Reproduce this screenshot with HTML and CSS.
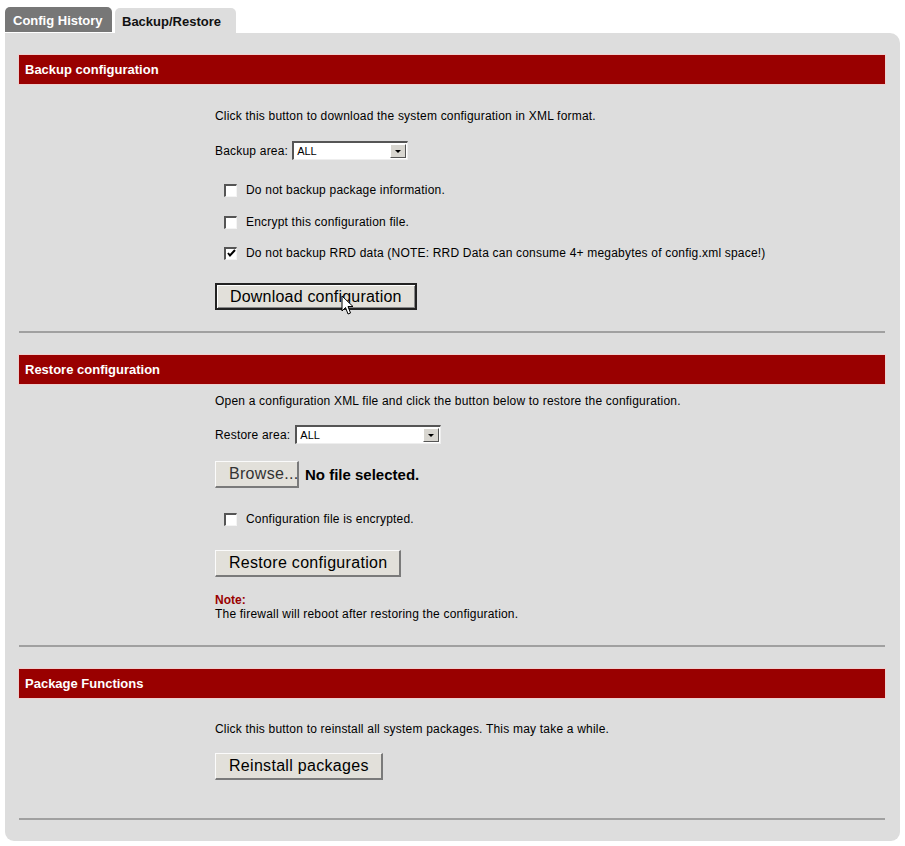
FILE: index.html
```html
<!DOCTYPE html>
<html>
<head>
<meta charset="utf-8">
<link rel="stylesheet" href="styles.css">
</head>
<body>
<div class="tabs">
  <div class="tab tab-off">Config History</div>
  <div class="tab tab-on">Backup/Restore</div>
</div>
<div class="panel">
  <div class="section">
    <div class="bar">Backup configuration</div>
    <div class="content c1">
      <div class="txt r-intro">Click this button to download the system configuration in XML format.</div>
      <div class="txt r-select">Backup area: <span class="select w-backup"><span class="sel-val">ALL</span><span class="sel-btn"><span class="arrow"></span></span></span></div>
      <label class="chk-row r-chk1"><span class="chk"></span><span class="txt">Do not backup package information.</span></label>
      <label class="chk-row r-chk2"><span class="chk"></span><span class="txt">Encrypt this configuration file.</span></label>
      <label class="chk-row r-chk3"><span class="chk checked"><svg width="9" height="9" viewBox="0 0 9 9"><path d="M1 4 L3 6.5 L8 1" fill="none" stroke="#000" stroke-width="2"/></svg></span><span class="txt">Do not backup RRD data (NOTE: RRD Data can consume 4+ megabytes of config.xml space!)</span></label>
      <div class="btn-wrap r-btn1">
        <span class="btn btn-default">Download configuration</span>
        <svg class="cursor" width="13" height="21" viewBox="0 0 13 21"><path d="M1 1 L1 16 L4.5 12.5 L7 19 L9.5 18 L7 11.5 L12 11.5 Z" fill="#fff" stroke="#000" stroke-width="1"/></svg>
      </div>
    </div>
    <div class="rule r-rule1"></div>
  </div>

  <div class="section">
    <div class="bar">Restore configuration</div>
    <div class="content">
      <div class="txt r-intro2">Open a configuration XML file and click the button below to restore the configuration.</div>
      <div class="txt r-select2">Restore area: <span class="select w-restore"><span class="sel-val">ALL</span><span class="sel-btn"><span class="arrow"></span></span></span></div>
      <div class="file-row r-file"><span class="btn btn-browse">Browse...</span><span class="nofile">No file selected.</span></div>
      <label class="chk-row r-chk4"><span class="chk"></span><span class="txt">Configuration file is encrypted.</span></label>
      <div class="btn-wrap r-btn2"><span class="btn">Restore configuration</span></div>
      <div class="note r-note">Note:</div>
      <div class="txt">The firewall will reboot after restoring the configuration.</div>
    </div>
    <div class="rule r-rule2"></div>
  </div>

  <div class="section">
    <div class="bar">Package Functions</div>
    <div class="content">
      <div class="txt r-intro3">Click this button to reinstall all system packages. This may take a while.</div>
      <div class="btn-wrap r-btn3"><span class="btn">Reinstall packages</span></div>
    </div>
    <div class="rule r-rule3"></div>
  </div>
</div>
</body>
</html>
```

FILE: styles.css
```css
html, body {
  margin: 0;
  padding: 0;
  background: #ffffff;
}
body {
  padding: 7px 5px 5px 5px;
  font-family: "Liberation Sans", Arial, sans-serif;
  font-size: 12px;
  color: #000;
  width: 895px;
}
.tabs {
  display: flex;
  align-items: flex-end;
  gap: 3px;
  height: 26px;
}
.tab {
  font-weight: bold;
  font-size: 13px;
  border-radius: 5px 5px 0 0;
  display: flex;
  align-items: center;
  box-sizing: border-box;
  padding-top: 2px;
}
.tab-off {
  background: #777777;
  color: #ffffff;
  height: 25px;
  padding-left: 8px;
  padding-right: 8px;
  align-self: flex-start;
  width: 107px;
}
.tab-on {
  background: #dddddd;
  color: #111;
  height: 25px;
  padding-left: 7px;
  padding-right: 7px;
  width: 121px;
}
.panel {
  background: #dddddd;
  border-radius: 0 10px 9px 9px;
  padding: 22px 15px 21px 14px;
}
.bar {
  background: #990000;
  color: #ffffff;
  font-weight: bold;
  font-size: 13px;
  height: 29px;
  line-height: 29px;
  padding-left: 6px;
  box-shadow: 0 0 0 1px #efcfcf;
}
.content {
  padding-left: 196px;
  display: flex;
  flex-direction: column;
  align-items: flex-start;
}
.txt {
  line-height: 14px;
  letter-spacing: 0.2px;
}
.r-intro { margin-top: 25px; }
.r-select { margin-top: 18px; display: flex; align-items: center; gap: 4px; height: 19px; }
.r-chk1 { margin-top: 23px; }
.r-chk2 { margin-top: 18px; }
.r-chk3 { margin-top: 17px; }
.r-btn1 { margin-top: 23px; }
.r-rule1 { margin-top: 21px; }

.r-intro2 { margin-top: 10px; }
.r-select2 { margin-top: 17px; display: flex; align-items: center; gap: 5px; height: 19px; }
.r-file { margin-top: 17px; }
.r-chk4 { margin-top: 24px; }
.r-btn2 { margin-top: 24px; }
.r-note { margin-top: 16px; }
.r-rule2 { margin-top: 24px; }

.r-intro3 { margin-top: 24px; }
.r-btn3 { margin-top: 17px; }
.r-rule3 { margin-top: 38px; }

.section + .section .bar { margin-top: 22px; }

.select {
  display: inline-flex;
  height: 19px;
  box-sizing: border-box;
  background: #fff;
  border-top: 2px solid #555;
  border-left: 2px solid #555;
  border-right: 1px solid #eee;
  border-bottom: 1px solid #eee;
  align-items: stretch;
  letter-spacing: 0;
}
.w-backup { width: 116px; }
.w-restore { width: 146px; }
.sel-val {
  flex: 1;
  font-size: 11px;
  line-height: 16px;
  padding-left: 3px;
}
.sel-btn {
  width: 16px;
  background: #d8d6d0;
  border-top: 1px solid #fff;
  border-left: 1px solid #fff;
  border-right: 1px solid #555;
  border-bottom: 1px solid #555;
  box-sizing: border-box;
  display: flex;
  align-items: center;
  justify-content: center;
  margin: 1px;
}
.arrow {
  width: 0;
  height: 0;
  border-left: 3px solid transparent;
  border-right: 3px solid transparent;
  border-top: 3px solid #000;
}
.chk-row {
  display: flex;
  align-items: center;
  gap: 9px;
  padding-left: 9px;
  height: 14px;
}
.chk {
  width: 13px;
  height: 13px;
  box-sizing: border-box;
  background: #fff;
  border-top: 2px solid #555;
  border-left: 2px solid #555;
  border-right: 1px solid #f4f4f4;
  border-bottom: 1px solid #f4f4f4;
  display: flex;
  align-items: center;
  justify-content: center;
}
.btn-wrap {
  position: relative;
  display: flex;
}
.btn {
  display: inline-flex;
  align-items: center;
  height: 27px;
  box-sizing: border-box;
  padding: 0 12px 0 13px;
  background: #e2e0da;
  border-top: 1px solid #fbfbfb;
  border-left: 1px solid #fbfbfb;
  border-right: 2px solid #7a7a7a;
  border-bottom: 2px solid #7a7a7a;
  font-size: 16px;
  letter-spacing: 0.3px;
  color: #000;
}
.btn-default {
  border: 2px solid #222;
  box-shadow: inset 1px 1px 0 #fff, inset -1px -1px 0 #888;
  width: 202px;
  letter-spacing: 0.2px;
}
.cursor {
  position: absolute;
  left: 126px;
  top: 12px;
}
.file-row {
  display: flex;
  align-items: center;
  gap: 6px;
}
.btn-browse {
  width: 84px;
  color: #333;
  letter-spacing: 0.3px;
}
.nofile {
  font-weight: bold;
  font-size: 15px;
}
.note {
  color: #990000;
  font-weight: bold;
  line-height: 14px;
}
.rule {
  height: 0;
  border-top: 2px solid #a0a0a0;
}
```
